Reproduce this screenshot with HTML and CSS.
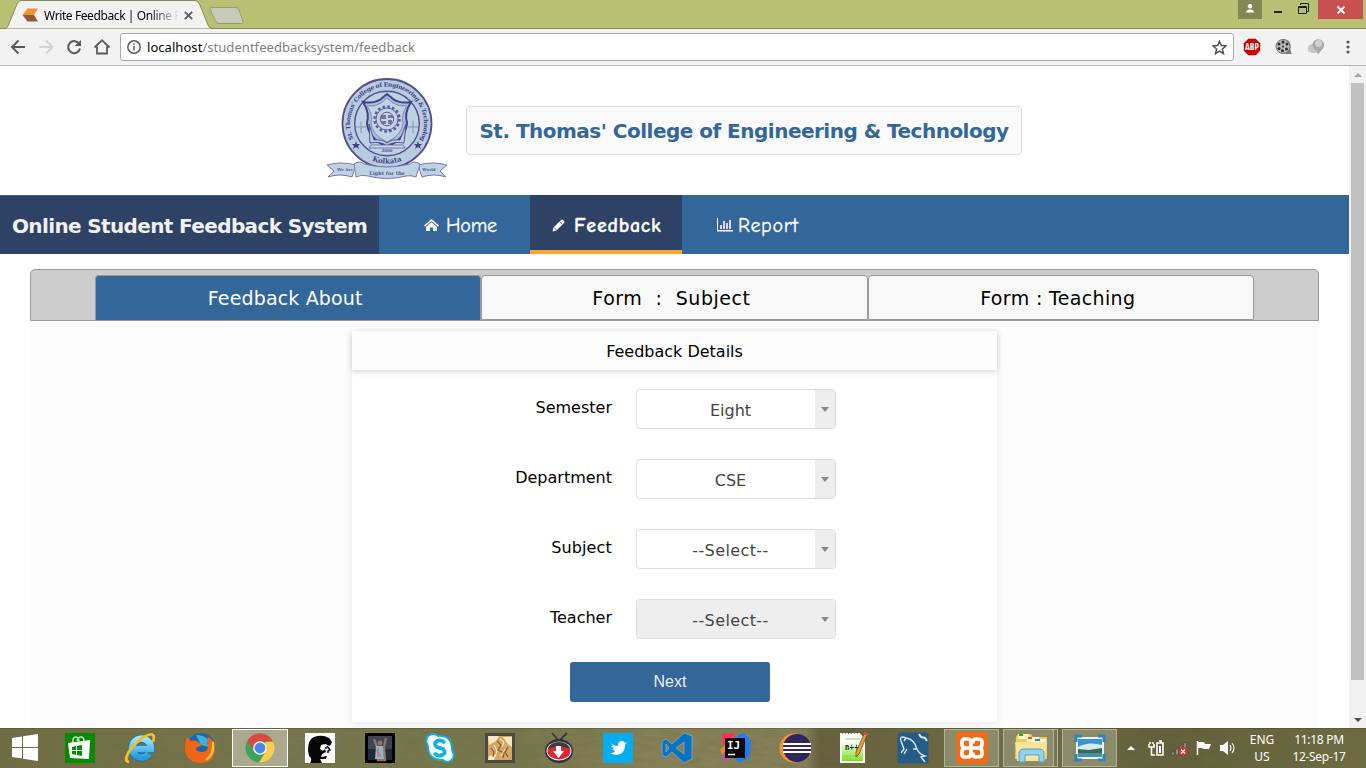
FILE: index.html
```html
<!DOCTYPE html>
<html lang="en">
<head>
<meta charset="utf-8">
<title>Write Feedback | Online Student Feedback System</title>
<link rel="stylesheet" href="styles.css">
</head>
<body>
<div class="tabstrip">
  <svg class="tab-shape" width="260" height="29" viewBox="0 0 260 29"><path d="M0 29V28.500H5.500Q7 28 8 26L17 4Q18.500.500 21 .500H195Q198 .500 199.500 4L208.500 26Q209.500 28.500 212 28.500H260V29Z" fill="#f2f2f2" stroke="#83895a"/><path d="M211.500 7.500H235Q237.500 7.500 238.500 9L243 21Q243.500 23.500 241.500 23.500H219Q216.500 23.500 215.500 21L210 9.500Q209.500 7.500 211.500 7.500Z" fill="#c9cbba" stroke="#969d6c"/></svg>
  <div class="tab">
    <svg width="17" height="15" viewBox="0 0 17 15"><path d="M5.500.500H16L12 7H.500Z" fill="#ef9136"/><path d="M.500 7H12L16 13.500H5.500Z" fill="#935a35"/></svg>
    <span class="tab-title">Write Feedback | Online F</span>
    <svg class="tab-close" width="9" height="9" viewBox="0 0 9 9"><path d="M.800.800L8.200 8.200M8.200.800L.800 8.200" stroke="#5a5a5a" stroke-width="1.800"/></svg>
  </div>
  <div class="window-controls">
    <span class="user"><svg width="10" height="10" viewBox="0 0 10 10" fill="#fff"><circle cx="5" cy="2.300" r="2.200"/><path d="M1 8.500Q1 5.500 5 5.500T9 8.500Z"/></svg></span>
    <span class="win"><svg width="10" height="12" viewBox="0 0 10 12"><path d="M1 9H9" stroke="#222" stroke-width="2"/></svg></span>
    <span class="win"><svg width="11" height="12" viewBox="0 0 11 12" fill="none" stroke="#222"><path d="M2.500 2V.500H10.500V8.500H9M.500 3.500H8.500V10.500H.500ZM.500 4.500H8"/></svg></span>
    <span class="close"><svg width="10" height="10" viewBox="0 0 10 10"><path d="M1.500 1.500L8.500 8.500M8.500 1.500L1.500 8.500" stroke="#fff" stroke-width="1.800"/></svg></span>
  </div>
</div>
<div class="toolbar">
  <svg class="nav-icons" width="112" height="36" viewBox="0 0 112 36" fill="none" stroke="#5a5a5a" stroke-width="2"><path d="M25 18H12.500M18.500 11.500L12 18L18.500 24.500"/><path stroke="#d3d3d3" d="M39.500 18H52M46 11.500L52.500 18L46 24.500"/><path d="M79.300 15A6 6 0 1 0 80 19.500"/><path fill="#5a5a5a" stroke="none" d="M81 11V17H74.500Z"/><path stroke-width="1.800" d="M94.500 18.500L102 11.200L109.500 18.500M97 17.500V24.500H107V17.500"/></svg>
  <div class="address">
    <svg width="14" height="14" viewBox="0 0 14 14" fill="none" stroke="#5a5a5a" stroke-width="1.500"><circle cx="7" cy="7" r="6.200"/><path d="M7 6V10.500M7 3.300V4.800"/></svg>
    <span class="url"><b>localhost</b>/studentfeedbacksystem/feedback</span>
    <svg class="star" width="15" height="15" viewBox="0 0 15 15" fill="none" stroke="#4c4c4c" stroke-width="1.400"><path d="M7.500 1.200L9.300 5.500L14 5.900L10.400 9.100L11.500 13.700L7.500 11.200L3.500 13.700L4.600 9.100L1 5.900L5.700 5.500Z"/></svg>
  </div>
  <svg width="18" height="18" viewBox="0 0 18 18"><path d="M5.300.800H12.700L17.200 5.300V12.700L12.700 17.200H5.300L.800 12.700V5.300Z" fill="#cb0000"/><text x="9" y="12" class="abp" textLength="14" lengthAdjust="spacingAndGlyphs">ABP</text></svg>
  <svg width="18" height="18" viewBox="0 0 18 18"><path d="M9 1Q16 2 15.500 9Q15 15 17.500 16H9Z" fill="#777"/><circle cx="8" cy="8.500" r="7" fill="#b9b9b9" stroke="#777"/><g fill="#303030"><circle cx="8" cy="4" r="1.500"/><circle cx="4" cy="6" r="1.500"/><circle cx="12" cy="6" r="1.500"/><circle cx="4" cy="10.500" r="1.500"/><circle cx="11.500" cy="11" r="1.500"/><circle cx="7.500" cy="12.800" r="1.500"/><circle cx="8" cy="8.500" r="1"/></g></svg>
  <svg width="18" height="18" viewBox="0 0 18 18"><path d="M1 11A5 4 0 0 1 6 6L13 13Q9 16 4 14.500Q1 14 1 11Z" fill="#c4c4c4"/><path d="M5.500 7A5.800 5.800 0 1 1 15 11.500L11 16.500L9.500 12.500Q6 11 5.500 7Z" fill="#a9a9a9"/><circle cx="11.500" cy="5.500" r="3.500" fill="#d1d1d1"/></svg>
  <svg class="menu-dots" width="4" height="14" viewBox="0 0 4 14" fill="#5a5a5a"><circle cx="2" cy="2" r="1.600"/><circle cx="2" cy="7" r="1.600"/><circle cx="2" cy="12" r="1.600"/></svg>
</div>
<div class="viewport">
  <div class="page">
    <header class="header">
      <svg class="crest" width="120" height="102" viewBox="0 0 120 102">
        <defs><path id="arcTop" d="M26.500 61A36.900 36.900 0 1 1 93.500 61"/><path id="arcBottom" d="M30 72A40 40 0 0 0 90 72"/></defs>
        <circle cx="60" cy="45.500" r="44.500" fill="#b7cddf" stroke="#544e91" stroke-width="1.800"/><circle cx="60" cy="45.500" r="32.300" fill="#bdd1e3" stroke="#544e91" stroke-width="1.400"/>
        <text class="crest-text"><textPath href="#arcTop">St. Thomas' College of Engineering &amp; Technology</textPath></text>
        <text class="crest-text city"><textPath href="#arcBottom" startOffset="50%" text-anchor="middle">Kolkata</textPath></text>
        <path d="M29 63L30 66L33 66L31 68L32 71L29 69L26 71L27 68L25 66L28 66ZM91 63L92 66L95 66L93 68L94 71L91 69L88 71L89 68L87 66L90 66Z" fill="#453f88"/>
        <path d="M60 16L66 21Q73 26 84 24Q77 35 80 45Q79 60 60 69Q41 60 40 45Q43 35 36 24Q47 26 54 21Z" fill="#a9bed6" stroke="#443e8b" stroke-width="2"/>
        <path d="M60 20L66 25Q72 29 80 28Q74 36 76 45Q75 57 60 64Q45 57 44 45Q46 36 40 28Q48 29 54 25Z" fill="#c2d4e4" stroke="#6e6ca4" stroke-width=".700"/>
        <circle cx="60" cy="41" r="12.500" fill="none" stroke="#605b98" stroke-width="2.500" stroke-dasharray="2.700 2.200"/><circle cx="60" cy="41" r="11" fill="#c2d4e4" stroke="#605b98"/><circle cx="60" cy="41" r="6.800" fill="none" stroke="#605b98"/><path d="M54 37H59V41H54ZM61 37H66V40H61ZM54 43H59V46H54ZM61 42H65V46H61Z" fill="#77739f"/>
        <path d="M29 49H39M34 43V55M81 49H91M86 43V55" stroke="#8792bb"/>
        <path d="M42 46L47 62Q55 61 60 65Q65 61 73 62L79 46L77 65Q65 63 60 68Q55 63 43 65Z" fill="#bdd1e3" stroke="#544e91"/><path d="M44 67H76L78 70H42Z" fill="#c7d8e7" stroke="#544e91" stroke-width=".700"/>
        <text x="60" y="74" class="crest-tiny">2000</text>
        <path d="M0 87Q14 83 29 87L25 99Q13 95 1 99L7 93ZM120 87Q106 83 91 87L95 99Q107 95 119 99L113 93Z" fill="#bdd3e4" stroke="#7879ad"/>
        <path d="M27 86Q33 82 37 86Q60 92 83 86Q87 82 93 86L89 99Q84 97 79 98Q60 103 41 98Q34 96 29 99Z" fill="#bdd3e4" stroke="#7879ad"/>
        <text x="60" y="96.500" class="crest-small">Light for the</text><text x="18" y="93" class="crest-tiny">We Are</text><text x="102" y="93" class="crest-tiny">World</text>
      </svg>
      <h1 class="college">St. Thomas' College of Engineering &amp; Technology</h1>
    </header>
    <nav class="nav">
      <div class="brand">Online Student Feedback System</div>
      <a class="link home"><svg width="15" height="12" viewBox="0 0 15 12" fill="#fff"><path d="M7.500 0L15 6.500L14 7.700L7.500 2L1 7.700L0 6.500Z"/><path d="M7.500 3.300L13 8V12H9V8.500H6V12H2V8Z"/></svg><span>Home</span></a>
      <a class="link active"><svg width="13" height="13" viewBox="0 0 13 13"><path d="M9 1Q10 0 11 1L12 2Q13 3 12 4L4.500 11.500L.500 12.500L1.500 8.500Z" fill="#fff"/><path d="M7.600 2.400L10.600 5.400M2 8.500L4.500 11" stroke="#2d4265" stroke-width=".800"/></svg><span>Feedback</span></a>
      <a class="link report"><svg width="16" height="14" viewBox="0 0 16 14" fill="#fff"><path d="M0 0H1V12H16V13.500H0Z"/><path fill="#e3d3f5" d="M3 7H5V11H3ZM6 3H8V11H6ZM9 5H11V11H9ZM12 2H14V11H12Z"/></svg><span>Report</span></a>
    </nav>
    <main class="main">
      <div class="steps"><div class="step current">Feedback About</div><div class="step subject">Form&nbsp; :&nbsp; Subject</div><div class="step teaching">Form : Teaching</div></div>
      <section class="content">
        <div class="card">
          <h2 class="card-title">Feedback Details</h2>
          <div class="fields">
            <div class="field"><label class="semester">Semester</label><div class="select"><span>Eight</span><i></i></div></div>
            <div class="field"><label class="department">Department</label><div class="select"><span>CSE</span><i></i></div></div>
            <div class="field"><label class="subject-label">Subject</label><div class="select placeholder"><span>--Select--</span><i></i></div></div>
            <div class="field"><label>Teacher</label><div class="select placeholder disabled"><span>--Select--</span><i></i></div></div>
          </div>
          <button class="next">Next</button>
        </div>
      </section>
    </main>
  </div>
  <div class="scrollbar"><span class="arrow up"></span><span class="thumb"></span><span class="arrow down"></span></div>
</div>
<div class="taskbar">
  <svg class="texture" width="1366" height="40"><filter id="grain"><feTurbulence type="fractalNoise" baseFrequency=".05 .2" numOctaves="3" seed="4"/><feColorMatrix values="0 0 0 0 .15 0 0 0 0 .15 0 0 0 0 .05 0 0 0 1.200 -.35"/></filter><rect width="1366" height="40" filter="url(#grain)" opacity=".5"/></svg>
  <div class="apps">
    <span class="app start"><svg width="28" height="28" viewBox="0 0 28 28" fill="#fff"><path d="M1 4L11 2.500V13H1ZM12 2.300L27 0V13H12ZM1 14H11V24.500L1 23ZM12 14H27V27L12 24.700Z"/></svg></span>
    <span class="app"><svg width="30" height="30" viewBox="0 0 30 30"><path fill="#078a00" d="M0 0H30V30H0Z"/><path d="M8 10V6Q9 3.500 11 4Q14 5 14 9M12 8Q13 4 16 4Q19 4 19 8" fill="none" stroke="#b8e5b5" stroke-width="1.500"/><path d="M3 10L25 7L24 26L5 25Z" fill="#fff"/><path d="M7 14L11 13V17H7ZM12 13L17 12V17H12ZM7 18H11V22L7 21ZM12 18H17V23L12 22Z" fill="#078a00"/></svg></span>
    <span class="app"><svg width="32" height="32" viewBox="0 0 32 32"><defs><linearGradient id="ie" x2="0" y2="1"><stop stop-color="#97e7ff"/><stop offset="1" stop-color="#269bdc"/></linearGradient></defs><path d="M25 22A9.500 9.500 0 1 1 27 17H10" fill="none" stroke="#1c6da9" stroke-width="8"/><path d="M25 22A9.500 9.500 0 1 1 27 17H10" fill="none" stroke="url(#ie)" stroke-width="6.500"/><path d="M5 30Q-1 29 6 18Q15 6 24 3Q32 0 29 10" fill="none" stroke="#f5bd21" stroke-width="2.800"/></svg></span>
    <span class="app"><svg width="32" height="32" viewBox="0 0 32 32"><circle cx="17" cy="15" r="14" fill="#1d67a9"/><path d="M12 3Q20 2 25 9Q22 10 25 15L17 13Z" fill="#3dafd8"/><path d="M3 5L7 9Q11 7 14 10L18 13L12 16Q12 20 18 20Q25 20 24 11Q22 5 25 5Q31 10 31 17Q30 31 16 31Q2 30 1 17Q1 9 3 5Z" fill="#ed6619"/><path d="M29 10Q31 22 22 28Q30 22 29 10Z" fill="#ffc62b" stroke="#ffc62b" stroke-width="2"/></svg></span>
    <span class="app selected"><svg width="30" height="30" viewBox="0 0 30 30"><circle cx="15" cy="15" r="14.500" fill="#3ca45b"/><path d="M2.400 7.800A14.500 14.500 0 0 1 28 8.500H15L9 18Z" fill="#d94b3c"/><path d="M28 8.500A14.500 14.500 0 0 1 14 29.500L21 18L20 9Z" fill="#fbcd49"/><circle cx="15" cy="15" r="6.800" fill="#f5f5f5"/><circle cx="15" cy="15" r="5.400" fill="#4687ee"/></svg></span>
    <span class="app"><svg width="30" height="30" viewBox="0 0 30 30"><path fill="#fff" d="M0 0H30V30H0Z"/><path d="M3 18Q3 6 9 4Q17 1 24 5L27 9L25 13L20 11L16 12L15 16L18 18L20 16L21 19L17 21L16 24L22 23L21 26L15 26L17 30H5Q8 26 4 23Z" fill="#050505"/><path d="M22 13L25 17L23 18V20M20 15L22 15" fill="none" stroke="#050505" stroke-width="1.500"/></svg></span>
    <span class="app"><svg width="30" height="30" viewBox="0 0 30 30"><path fill="#000" d="M0 0H30V30H0Z"/><path fill="#3c4653" d="M3 3H27V27H3Z"/><path fill="#202936" d="M3 16H27V27H3Z"/><path d="M9 6L12 14L13 27H20L19 14L21 5" fill="none" stroke="#8f7467" stroke-width="2.300"/><path d="M11 13H18L19 26H10Z" fill="#92b1cb"/><circle cx="15" cy="10" r="2.500" fill="#976f55"/><path d="M12 17L16 24M13 15V24" stroke="#df643d"/></svg></span>
    <span class="app"><svg width="30" height="30" viewBox="0 0 30 30"><path d="M8 1Q11 1 13 3Q27 2 27 17Q31 25 25 28Q22 30 18 27Q3 27 3 13Q-1 5 5 2Q6 1 8 1Z" fill="#f5fbff" stroke="#12aee9" stroke-width="1.800"/><path d="M20 10Q16 6 12 8Q8 11 12 14L18 16Q22 20 17 22Q13 24 9 20" fill="none" stroke="#12aee9" stroke-width="3.800"/></svg></span>
    <span class="app narrow"><svg width="30" height="30" viewBox="0 0 30 30"><path d="M0 0H30V30H0Z" fill="#4c4943"/><path d="M3 3H27V27H3Z" fill="#d3a865"/><path d="M3 3H14L11 8L4 12ZM18 4H27V14L23 11ZM4 23L10 22L9 27H3Z" fill="#f6e8c4"/><path d="M12 8L16 12L13 17L19 20L18 25M6 15L9 19L8 24M23 14L20 19L23 24" stroke="#96552a" stroke-width="1.200" fill="none"/><path d="M15 6L19 9L17 14M9 12L12 18L10 24M20 16L16 23" stroke="#fff0c8" fill="none"/></svg></span>
    <span class="app narrow"><svg width="30" height="32" viewBox="0 0 30 32"><path d="M8 1L15 9L23 1" fill="none" stroke="#303b43" stroke-width="1.800"/><ellipse cx="15" cy="19" rx="14" ry="12" fill="#29353d"/><ellipse cx="15" cy="19" rx="12.500" ry="9.500" fill="#eee"/><ellipse cx="15" cy="19" rx="11.500" ry="8.500" fill="#e12736"/><path d="M4 17Q6 10 15 10Q24 10 26 17Q15 12 4 17Z" fill="#3d3d3d"/><path d="M12 14H17V19H20L14.500 26L9 19H12Z" fill="#fff"/></svg></span>
    <span class="app narrow"><svg width="30" height="30" viewBox="0 0 30 30"><path fill="#05adef" d="M0 0H30V30H0Z"/><path d="M7 9Q10 13 15 13Q15 8 19 8Q21 8 22 10L24 9L22 12Q22 21 14 22Q10 22 7 20Q11 20 12 18L9 16L11 16L8 13H10Z" fill="#fff"/></svg></span>
    <span class="app narrow"><svg width="32" height="32" viewBox="0 0 32 32"><path d="M23 1L31 4V27L23 31L11 20L5 25L1 23V9L5 7L11 12ZM5 12V20L8 16ZM23 10L15 16L23 22Z" fill="#0874bf" stroke="#7faac0" stroke-width=".800" fill-rule="evenodd"/></svg></span>
    <span class="app narrow"><svg width="32" height="32" viewBox="0 0 32 32"><path d="M2 2L15 1L12 15L3 14Z" fill="#fe315d"/><path d="M0 17L10 10V24L2 22Z" fill="#ef8433"/><path d="M18 3L24 1L31 9L29 26L19 31L12 24Z" fill="#207cf2"/><path d="M4 20L18 23L2 31Z" fill="#b05a9b"/><path fill="#080808" d="M5 6H25V26H5Z"/><text x="7" y="17" class="ij">IJ</text><path d="M8 22.500H15" stroke="#fff" stroke-width="1.500"/></svg></span>
    <span class="app narrow"><svg width="32" height="30" viewBox="0 0 32 30"><circle cx="15" cy="15" r="14.500" fill="#f59527"/><circle cx="18" cy="15" r="14" fill="#2e2460"/><path d="M4 11H32M4 15H32M4 19H32" stroke="#fff" stroke-width="1.800"/></svg></span>
    <span class="app narrow"><svg width="30" height="32" viewBox="0 0 30 32"><defs><linearGradient id="np" x2="0" y2="1"><stop offset=".25" stop-color="#fff"/><stop offset="1" stop-color="#74e316"/></linearGradient></defs><path d="M2 2H20L25 7V30H2Z" fill="url(#np)" stroke="#f5f7ee" stroke-width="2"/><path d="M3 1H20" stroke="#555" stroke-dasharray="1 2"/><path d="M6 7H21M5 24H21" stroke="#9abf8d"/><text x="6" y="18" class="npp" textLength="14" lengthAdjust="spacingAndGlyphs">n++</text><path d="M28 3L20 22L17 25V20L25 2Z" fill="#e8a13a" stroke="#6f4a29" stroke-width=".800"/><path d="M25 1L29 3" stroke="#d84f4f" stroke-width="2"/></svg></span>
    <span class="app narrow"><svg width="32" height="32" viewBox="0 0 32 32"><rect x=".500" y=".500" width="31" height="31" rx="3" fill="#235d87"/><path d="M4 21L7 17L4 9Q2 3 9 6Q17 7 20 17Q22 22 28 24L24 25L28 30M9 6L7 9M20 17L16 17M10 17L7 22" fill="none" stroke="#d5e7f0" stroke-width="1.400"/><path d="M22 2L24 5L28 6L30 9" stroke="#d5e7f0" stroke-width="2" fill="none"/></svg></span>
    <span class="app running first"><svg width="32" height="32" viewBox="0 0 32 32"><rect width="32" height="32" rx="3" fill="#ee6b19"/><path d="M15 21V10Q15 7 11 7H9Q6 7 6 10V12Q6 16 10 16H22Q26 16 26 12V10Q26 7 22 7H20Q17 7 17 10M10 16Q6 16 6 20V22Q6 25 9 25H12Q15 25 15 21M22 16Q26 16 26 20V22Q26 25 22 25H20Q17 25 17 22" fill="none" stroke="#fff" stroke-width="3.700" stroke-linecap="round"/></svg></span>
    <span class="app running folder"><svg width="34" height="32" viewBox="0 0 34 32"><path d="M2 5L4 2H17L19 5H33V27H1Z" fill="#e8cb68"/><path d="M4 2H15V7H4ZM13 5H25V10H13ZM20 7H32V11H20Z" fill="#fff1bd"/><path d="M5 2H9V4H5Z" fill="#15b32a"/><path d="M14 5H18V7H14Z" fill="#dc5145"/><path d="M21 7H26V9H21Z" fill="#248ed0"/><path d="M1 10H33L31 29H3Z" fill="#f9e595"/><path d="M5 20Q6 17 10 17H26Q29 17 30 20V30H25V23H11V30H5Z" fill="#8fd4ef" stroke="#569dbe"/></svg></span>
    <span class="app running"><svg width="32" height="28" viewBox="0 0 32 28"><path fill="#e5f2f8" d="M2 3H30V25H2Z"/><path fill="#3c95d3" d="M4 5H28V23H4Z"/><path d="M4 13Q14 7 28 11V17H4Z" fill="#d6edf5"/><path d="M4 15L15 16L28 14V19H4Z" fill="#386a53"/><path d="M4 19H28V23H4Z" fill="#4c8da5"/><path d="M2 8V2H8M24 2H30V8M30 20V26H24M8 26H2V20" fill="none" stroke="#3281bd" stroke-width="3"/></svg></span>
  </div>
  <div class="tray">
    <svg width="112" height="22" viewBox="0 0 112 22"><path d="M0 13L4 9L8 13Z" fill="#fff"/><path d="M30 6H36V18H30ZM32 4H34V6M22 7V10H27V7M23 5V7M26 5V7M24.500 10V18H28" fill="none" stroke="#fff" stroke-width="1.600"/><path d="M32 9H34V16H32Z" fill="#fff"/><path d="M45 15H47V18H45ZM49 12H51V18H49ZM53 9H55V18H53ZM57 6H59V18H57Z" fill="#aaa99d" stroke="#38372d" stroke-width=".500"/><circle cx="56" cy="14.500" r="4.500" fill="#df2936"/><path d="M54 12.500L58 16.500M58 12.500L54 16.500" stroke="#fff" stroke-width="1.500"/><path d="M70.500 4V18" stroke="#fff" stroke-width="1.500"/><path d="M71 5H77L78 7H84L82 12H76L75 11H71Z" fill="#fff"/><path d="M93 8H96L101 4V18L96 14H93Z" fill="#fff"/><path d="M103 8Q105 11 103 14M105 6Q109 11 105 16" fill="none" stroke="#f5f5e9" stroke-width="1.200"/></svg>
    <div class="lang"><span>ENG</span><span>US</span></div>
    <div class="clock"><span>11:18 PM</span><span>12-Sep-17</span></div>
  </div>
</div>
</body>
</html>
```
FILE: styles.css
```css
* { box-sizing: border-box; }
body { margin: 0; width: 1366px; height: 768px; overflow: hidden; display: flex; flex-direction: column; background: #fff; font-family: "DejaVu Sans", Verdana, sans-serif; color: #000; }
svg { display: block; flex: none; }
h1, h2 { margin: 0; font-weight: normal; }

/* Browser chrome */
.tabstrip { position: relative; height: 29px; flex: none; display: flex; justify-content: space-between; background: #b8c073; border-bottom: 1px solid #83895a; }
.tab-shape { position: absolute; left: 0; top: 0; }
.tab { position: relative; display: flex; align-items: center; height: 29px; padding: 1px 0 0 22px; }
.tab-title { width: 134px; margin-left: 5px; overflow: hidden; white-space: nowrap; font: 12px "Noto Sans", sans-serif; letter-spacing: -.4px; -webkit-mask-image: linear-gradient(90deg, #000 105px, transparent 136px); mask-image: linear-gradient(90deg, #000 105px, transparent 136px); }
.tab-close { margin-left: 6px; }
.window-controls { display: flex; height: 19px; padding-right: 3px; }
.window-controls span { display: flex; align-items: center; justify-content: center; }
.user { width: 24px; background: #818851; }
.user svg { margin-bottom: 2px; }
.win { width: 27px; margin-right: -1px; padding: 0 2px 1px 6px; }
.close { width: 45px; margin-left: 4px; background: #c75050; }
.toolbar { height: 37px; flex: none; display: flex; align-items: center; padding-right: 16px; background: #f2f2f2; border-bottom: 1px solid #b6b4b6; }
.nav-icons { margin-right: 8px; }
.address { display: flex; align-items: center; width: 1114px; height: 28px; padding: 0 6px; margin-right: 9px; background: #fff; border: 1px solid #a9a9a9; border-radius: 3px; }
.toolbar > svg + svg { margin-left: 14px; }
.toolbar > .menu-dots { margin-left: auto !important; }
.url { margin-left: 6px; font: 13px "Noto Sans", sans-serif; letter-spacing: .05px; color: #808080; }
.url b { color: #000; font-weight: normal; }
.star { margin-left: auto; }
.abp { font: bold 8px "DejaVu Sans", sans-serif; fill: #fff; text-anchor: middle; }

/* Page */
.viewport { display: flex; flex: 1; min-height: 0; overflow: hidden; }
.page { width: 1349px; display: flex; flex-direction: column; }
.header { height: 129px; flex: none; display: flex; align-items: flex-start; gap: 19px; padding: 12px 0 0 327px; }
.college { width: 556px; height: 49px; margin-top: 28px; border: 1px solid #ddd; border-radius: 4px; background: #fafafa; color: #336699; font-size: 20px; font-weight: bold; letter-spacing: -.51px; line-height: 48px; text-align: center; white-space: nowrap; }
.crest-text { font: bold 6px "DejaVu Serif", serif; letter-spacing: -.32px; fill: #453f88; }
.crest-text.city { font-size: 7px; letter-spacing: 0; }
.crest-small { font: bold 5px "DejaVu Serif", serif; fill: #555593; text-anchor: middle; }
.crest-tiny { font: bold 4px "DejaVu Serif", serif; fill: #555593; text-anchor: middle; }
.nav { height: 59px; flex: none; display: flex; background: #336699; }
.brand { width: 379px; margin-top: 1px; padding-left: 12px; background: #2d4265; color: #f0f0f0; font-size: 20px; font-weight: bold; letter-spacing: -.63px; line-height: 60px; white-space: nowrap; }
.link { display: flex; align-items: center; gap: 7px; padding-top: 1px; color: #fff; font: 20px "Comic Neue", "Comic Sans MS", "Open Sans", sans-serif; -webkit-text-stroke: .3px #fff; }
.link.home { width: 151px; padding-left: 45px; letter-spacing: -.2px; }
.link.active { width: 152px; padding: 5px 0 0 22px; gap: 9px; font-weight: bold; letter-spacing: .75px; background: #2d4265; border-bottom: 4px solid #faa732; }
.link.report { padding-left: 35px; gap: 5px; letter-spacing: .7px; }
.main { flex: 1; display: flex; flex-direction: column; padding: 15px 30px 0; }
.steps { display: flex; height: 52px; flex: none; padding: 5px 64px 0; background: #ccc; border: 1px solid #999; border-radius: 5px 5px 0 0; }
.step { flex: 1; padding-right: 6px; border: 1px solid #999; border-radius: 4px 4px 0 0; background: #f8f8f8; font-size: 19px; line-height: 45px; text-align: center; }
.step.current { background: #336699; color: #fff; border-bottom: 0; letter-spacing: .15px; }
.step.subject { letter-spacing: .55px; }
.step.teaching { letter-spacing: .35px; }
.content { flex: 1; padding: 10px 0 6px 322px; background: #fcfcfc; }
.card { width: 645px; height: 391px; background: #fff; box-shadow: 0 2px 8px rgba(0,0,0,.07); }
.card-title { height: 39px; margin-bottom: 1px; background: #fcfcfc; box-shadow: 0 2px 6px rgba(0,0,0,.16); font-size: 16px; line-height: 41px; text-align: center; }
.fields { display: flex; flex-direction: column; gap: 30px; padding-top: 18px; }
.field { display: flex; height: 40px; gap: 24px; }
.field label { width: 260px; font-size: 16px; line-height: 38px; text-align: right; }
.subject-label { letter-spacing: .15px; }
.select { width: 200px; display: flex; border: 1px solid #ddd; border-radius: 4px; background: #fff; color: #444; font-size: 16px; line-height: 41px; overflow: hidden; }
.select span { flex: 1; padding-left: 9px; text-align: center; }
.select.placeholder span { letter-spacing: .4px; }
.select i { width: 20px; display: flex; align-items: center; justify-content: center; background: #eee; }
.select i::after { content: ""; border: 4px solid transparent; border-top: 5px solid #888; border-bottom: 0; }
.select.disabled { background: #eee; }
.next { display: block; width: 200px; height: 40px; margin: 23px 0 0 218px; border: 0; border-radius: 3px; background: #336699; color: #eee; font: 16px "Liberation Sans", Arial, sans-serif; }
.scrollbar { width: 17px; display: flex; flex-direction: column; align-items: center; justify-content: space-between; padding: 7px 0 6px; background: #f1f1f1; }
.thumb { width: 13px; height: 597px; margin-bottom: 32px; background: #c1c1c1; }
.arrow { border: 4px solid transparent; }
.up { border-top: 0; border-bottom-color: #a3a3a3; }
.down { border-bottom: 0; border-top-color: #505050; }

/* Taskbar */
.taskbar { position: relative; height: 40px; flex: none; display: flex; justify-content: space-between; background: linear-gradient(#34351f55 0 1px, transparent 1px), linear-gradient(90deg, #6e6d44, #777650 20%, #77774d 38%, #88825a 48%, #85805a 59%, #665f3d 60%, #706d46 75%, #615f3b 85%, #6c6b43); }
.texture { position: absolute; left: 0; top: 0; }
.apps, .tray { position: relative; display: flex; }
.app { width: 60px; height: 40px; display: flex; align-items: center; justify-content: center; }
.start { width: 50px; }
.narrow { width: 59px; }
.selected { width: 56px; height: 38px; margin: 1px 2px; background: #aaa990; border: 1px solid #fff; }
.running { width: 55px; height: 38px; margin: 1px 4px 0 0; background: #8b8a69; border: 1px solid #b3b298; }
.first { margin-left: 2px; }
.folder { box-shadow: inset -3px 0 #77765a, inset -4px 0 #b3b298; }
.tray { align-items: center; color: #fff; font: 12px "Noto Sans", sans-serif; }
.lang, .clock { display: flex; flex-direction: column; align-items: center; line-height: 17px; white-space: nowrap; }
.lang { width: 30px; margin-left: 8px; }
.clock { width: 62px; margin: 0 16px 0 11px; letter-spacing: -.3px; }
.ij { font: bold 11px "DejaVu Sans Mono", monospace; fill: #fff; }
.npp { font: bold 8px "DejaVu Sans", sans-serif; fill: #222; }
```
